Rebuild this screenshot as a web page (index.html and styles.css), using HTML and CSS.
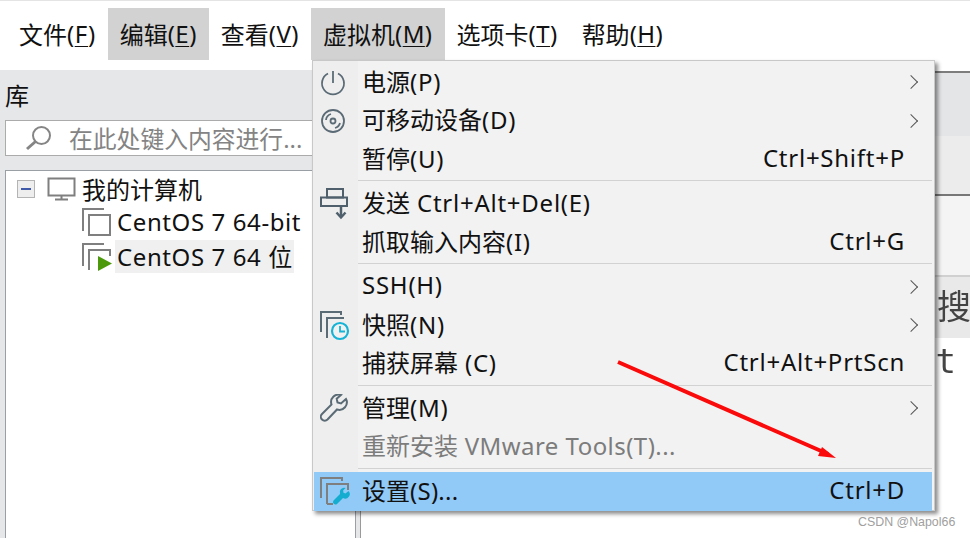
FILE: index.html
```html
<!DOCTYPE html>
<html lang="zh-CN">
<head>
    <meta charset="UTF-8">
    <title>VMware Workstation</title>
    <link rel="stylesheet" href="styles.css">
</head>
<body>
    <div class="app">
        <nav class="menubar">
            <span class="menubar-item">文件<span class="lat">(<u>F</u>)</span></span>
            <span class="menubar-item is-hover">编辑<span class="lat">(<u>E</u>)</span></span>
            <span class="menubar-item">查看<span class="lat">(<u>V</u>)</span></span>
            <span class="menubar-item is-hover">虚拟机<span class="lat">(<u>M</u>)</span></span>
            <span class="menubar-item">选项卡<span class="lat">(<u>T</u>)</span></span>
            <span class="menubar-item">帮助<span class="lat">(<u>H</u>)</span></span>
        </nav>

        <div class="workspace">
            <aside class="library">
                <div class="library-title">库</div>
                <div class="search">
                    <svg class="search-icon" width="28" height="28" viewBox="0 0 28 28" fill="none" stroke="#858585">
                        <circle cx="16.500" cy="11.500" r="8.500" stroke-width="2"/>
                        <path d="M10.500 17.500 2 25" stroke-width="3"/>
                    </svg>
                    <span class="search-text">在此处键入内容进行...</span>
                </div>
                <div class="tree">
                    <div class="tree-row tree-root">
                        <span class="tree-toggle"><span class="tree-minus"></span></span>
                        <svg class="tree-monitor" width="30" height="24" viewBox="0 0 30 24" fill="none" stroke="#7f7f7f" stroke-width="2">
                            <rect x="1.500" y="1.500" width="26" height="17"/>
                            <path d="M14.500 18.500v4M8 22.500h13"/>
                        </svg>
                        <span>我的计算机</span>
                    </div>
                    <div class="tree-row tree-vm">
                        <svg width="30" height="30" viewBox="0 0 30 30" fill="none" stroke="#7f7f7f" stroke-width="2">
                            <path d="M1 24V2h21"/>
                            <rect x="7" y="8" width="21" height="20"/>
                        </svg>
                        <span class="tree-label"><span class="lat">CentOS 7 64-bit</span></span>
                    </div>
                    <div class="tree-row tree-vm">
                        <svg width="30" height="30" viewBox="0 0 30 30" fill="none">
                            <path d="M1 24V2h21M7 28V8h21v6" stroke="#7f7f7f" stroke-width="2"/>
                            <path d="M16 14l14 7.500-14 7.500z" fill="#4c9a0c"/>
                        </svg>
                        <span class="tree-label is-running"><span class="lat">CentOS 7 64 </span>位</span>
                    </div>
                </div>
            </aside>

            <main class="content">
                <div class="content-tabs"></div>
                <div class="content-tools"></div>
                <div class="content-pad"></div>
                <div class="content-search"><span>搜</span></div>
                <div class="content-code"><span>t</span></div>
            </main>
        </div>
    </div>

    <div class="vm-menu">
        <div class="vm-item">
            <svg class="vm-icon" width="28" height="28" viewBox="0 0 28 28" fill="none" stroke="#5b6b76" stroke-width="1.800">
                <path d="M8 5.500a11 11 0 1 0 10 0"/>
                <path d="M13 3v12"/>
            </svg>
            <span class="vm-label">电源<span class="lat">(P)</span></span>
            <span class="vm-arrow"></span>
        </div>
        <div class="vm-item">
            <svg class="vm-icon" width="28" height="28" viewBox="0 0 28 28" fill="none" stroke="#5b6b76" stroke-width="1.800">
                <circle cx="13" cy="14" r="11"/>
                <circle cx="13" cy="14" r="2.500"/>
                <path d="M6 13a7 7 0 0 1 5-6M15 21a7 7 0 0 0 5-5"/>
            </svg>
            <span class="vm-label">可移动设备<span class="lat">(D)</span></span>
            <span class="vm-arrow"></span>
        </div>
        <div class="vm-item">
            <span class="vm-label">暂停<span class="lat">(U)</span></span>
            <span class="vm-keys lat">Ctrl+Shift+P</span>
        </div>
        <div class="vm-sep"></div>
        <div class="vm-item">
            <svg class="vm-icon" width="32" height="32" viewBox="0 0 32 32" fill="none" stroke="#4f606c" stroke-width="2">
                <rect x="7" y="1" width="16" height="8.500"/>
                <rect x="1" y="9.500" width="26" height="8.500"/>
                <path d="M21 18v11" stroke-width="2.500"/>
                <path d="M16.500 24.500l4.500 5 4.500-5" stroke-width="2.500"/>
            </svg>
            <span class="vm-label">发送<span class="lat"> Ctrl+Alt+Del(E)</span></span>
        </div>
        <div class="vm-item">
            <span class="vm-label">抓取输入内容<span class="lat">(I)</span></span>
            <span class="vm-keys lat">Ctrl+G</span>
        </div>
        <div class="vm-sep"></div>
        <div class="vm-item">
            <span class="vm-label"><span class="lat">SSH(H)</span></span>
            <span class="vm-arrow"></span>
        </div>
        <div class="vm-item">
            <svg class="vm-icon" width="32" height="32" viewBox="0 0 32 32" fill="none">
                <path d="M1 23V3h20v3M7 29V9h17" stroke="#5b6b76" stroke-width="2"/>
                <circle cx="20" cy="22" r="8" stroke="#15b3d6" stroke-width="2.200" fill="#f1f1f1"/>
                <path d="M20 17v5.500h5" stroke="#15b3d6" stroke-width="1.800"/>
            </svg>
            <span class="vm-label">快照<span class="lat">(N)</span></span>
            <span class="vm-arrow"></span>
        </div>
        <div class="vm-item">
            <span class="vm-label">捕获屏幕<span class="lat"> (C)</span></span>
            <span class="vm-keys lat">Ctrl+Alt+PrtScn</span>
        </div>
        <div class="vm-sep"></div>
        <div class="vm-item">
            <svg class="vm-icon" width="28" height="28" viewBox="0 0 28 28" fill="none" stroke="#5b6b76" stroke-width="2">
                <path d="M26 5l-5 4.500-3.500-1-.8-3.800L21 1a7.500 7.500 0 0 0-9.500 9.500L2 20a3.600 3.600 0 0 0 5.500 5.500l9.500-10A7.500 7.500 0 0 0 26 5z"/>
            </svg>
            <span class="vm-label">管理<span class="lat">(M)</span></span>
            <span class="vm-arrow"></span>
        </div>
        <div class="vm-item is-disabled">
            <span class="vm-label">重新安装<span class="lat is-tight"> VMware Tools(T)...</span></span>
        </div>
        <div class="vm-sep"></div>
        <div class="vm-item is-active">
            <svg class="vm-icon" width="32" height="32" viewBox="0 0 32 32" fill="none">
                <path d="M1 23V3h21v3M7 29V9h21v6M7 29h6" stroke="#7f7f7f" stroke-width="2"/>
                <path d="M28.500 16l-3 2.500-2-.7-.4-2.300 2.400-2.500a4.500 4.500 0 0 0-5.500 6L13.500 25.500a2.500 2.500 0 0 0 3.500 3.500l6-6a4.500 4.500 0 0 0 5.500-7z" fill="#14add0"/>
            </svg>
            <span class="vm-label">设置<span class="lat is-tighter">(S)...</span></span>
            <span class="vm-keys lat">Ctrl+D</span>
        </div>
    </div>

    <svg class="annotation" width="970" height="538" viewBox="0 0 970 538">
        <path d="M618 362 828 454" stroke="#fa0a0a" stroke-width="4" fill="none"/>
        <path d="M836 458 822 447 818 456z" fill="#fa0a0a"/>
    </svg>

    <div class="watermark">CSDN @Napol66</div>
</body>
</html>
```

FILE: styles.css
```css
* {
    box-sizing: border-box;
}
html, body {
    margin: 0;
    height: 100%;
    overflow: hidden;
}
body {
    font-family: "Noto Sans", "Noto Sans CJK SC", sans-serif;
    font-size: 24px;
    color: #111;
    background-color: white;
}
u {
    text-underline-offset: 3px;
    text-decoration-thickness: 1px;
}
.lat {
    letter-spacing: 0.75px;
    white-space: pre;
}
.lat.is-tight {
    letter-spacing: 0.45px;
}
.lat.is-tighter {
    letter-spacing: 0.25px;
}
.app {
    display: flex;
    flex-direction: column;
    height: 538px;
}
.menubar {
    display: flex;
    height: 70px;
    padding: 8px 0 0 7px;
    border-top: 1px solid #e4e4e4;
    flex-shrink: 0;
}
.menubar .lat {
    letter-spacing: 0.45px;
}
.menubar-item {
    display: flex;
    align-items: center;
    height: 52px;
    margin-top: -1px;
    padding: 0 12px 2px;
    white-space: nowrap;
}
.menubar-item.is-hover {
    background-color: #d2d2d2;
}
.workspace {
    display: flex;
    flex: 1;
    min-height: 0;
}
.library {
    display: flex;
    flex-direction: column;
    width: 361px;
    padding-left: 5px;
    background-color: #e6e7e9;
    border-right: 1px solid #9a9a9a;
}
.library-title {
    height: 50px;
    line-height: 52px;
}
.search {
    display: flex;
    align-items: center;
    gap: 16px;
    height: 36px;
    margin-right: -1px;
    padding-left: 19px;
    background-color: white;
    border: 1px solid #ababab;
    flex-shrink: 0;
}
.search-text {
    padding-bottom: 2px;
    color: #848484;
    font-size: 23.800px;
    white-space: nowrap;
}
.tree {
    flex: 1;
    width: 351px;
    margin-top: 14px;
    background-color: white;
    border: 1px solid #9a9fa6;
    border-width: 1px 1px 0 1px;
}
.tree-row {
    display: flex;
    align-items: center;
    height: 35px;
}
.tree-root {
    margin-bottom: -2px;
    padding-left: 11px;
}
.tree-toggle {
    display: flex;
    align-items: center;
    justify-content: center;
    width: 18px;
    height: 18px;
    margin-right: 12px;
    background-color: #eeeeee;
    border: 1px solid #b4b4b4;
}
.tree-minus {
    width: 10px;
    height: 2px;
    background-color: #3f5aa8;
}
.tree-monitor {
    margin-right: 5px;
}
.tree-vm {
    padding-left: 76px;
}
.tree-label {
    margin-left: 3px;
    padding: 0 2px;
    line-height: 33px;
}
.tree-label .lat {
    letter-spacing: 0.6px;
}
.tree-label.is-running {
    background-color: #f0f0f0;
}
.content {
    display: flex;
    flex-direction: column;
    flex: 1;
    min-width: 0;
    overflow: hidden;
    padding-top: 1px;
}
.content-tabs {
    height: 65px;
    background-color: #e4e5e7;
    border-top: 2px solid #7d7d7d;
}
.content-tools {
    height: 60px;
    background-color: #ececec;
    border-bottom: 2px solid #777777;
}
.content-pad {
    height: 79px;
    background-color: #f4f4f4;
}
.content-search {
    display: flex;
    justify-content: flex-end;
    height: 63px;
    padding-top: 6px;
    background-color: #e9e9e9;
    border-top: 2px solid #d0d0d0;
    color: #444444;
    font-size: 34px;
    line-height: 46px;
    filter: blur(0.5px);
}
.content-search span {
    margin-right: -1px;
}
.content-code {
    display: flex;
    justify-content: flex-end;
    padding-right: 14px;
    color: #444444;
    font-family: "DejaVu Sans Mono", monospace;
    font-size: 34px;
    line-height: 46px;
    filter: blur(0.5px);
}
.vm-menu {
    position: absolute;
    left: 312px;
    top: 60px;
    width: 623px;
    height: 451px;
    padding: 2px 2px 0 1px;
    background: linear-gradient(90deg, #eeeeee 45px, #f2f2f2 45px);
    border: 1px solid #c8c8c8;
    box-shadow: 3px 3px 4px rgba(0,0,0,0.45);
}
.vm-item {
    display: flex;
    align-items: center;
    position: relative;
    height: 38.500px;
    padding: 0 27px 4px 48px;
    white-space: nowrap;
}
.vm-label {
    flex: 1;
}
.vm-icon {
    position: absolute;
    left: 6px;
    top: 50%;
    transform: translateY(-50%);
}
.vm-arrow {
    width: 10px;
    height: 10px;
    margin: 4px -11px 0 0;
    border-top: 1.500px solid #555555;
    border-right: 1.500px solid #555555;
    transform: rotate(45deg);
}
.vm-sep {
    height: 1px;
    margin: 1.500px 0 3.500px 44px;
    background-color: #d2d2d2;
}
.vm-item.is-disabled {
    color: #7c7c7c;
}
.vm-item.is-active {
    background-color: #91c9f7;
}
.annotation {
    position: absolute;
    left: 0;
    top: 0;
    pointer-events: none;
}
.watermark {
    position: absolute;
    left: 858px;
    top: 515px;
    color: #a0a0a0;
    font-family: "Liberation Sans", sans-serif;
    font-size: 12.400px;
    white-space: nowrap;
}
```
